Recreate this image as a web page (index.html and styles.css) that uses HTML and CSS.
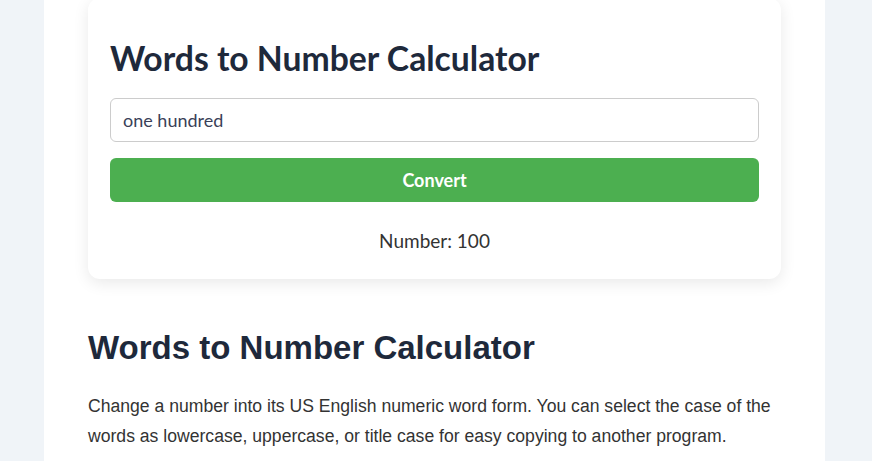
FILE: index.html
```html
<!DOCTYPE html>
<html lang="en">
<head>
<meta charset="utf-8">
<title>Words to Number Calculator</title>
<link rel="stylesheet" href="styles.css">
</head>
<body>
<div class="page">
  <main class="container">
    <section class="card">
      <h1 class="card-title">Words to Number Calculator</h1>
      <input class="words-input" type="text" value="one hundred">
      <button class="convert-btn" type="button">Convert</button>
      <p class="result">Number: 100</p>
    </section>
    <article class="content">
      <h2 class="content-title">Words to Number Calculator</h2>
      <p class="content-text">Change a number into its US English numeric word form. You can select the case of the words as lowercase, uppercase, or title case for easy copying to another program.</p>
    </article>
  </main>
</div>
</body>
</html>
```
FILE: styles.css
```css
html, body {
  margin: 0;
  padding: 0;
  background: #f0f4f8;
  overflow: hidden;
}
.page {
  height: 461px;
  padding-left: 44px;
}
.container {
  display: flow-root;
  width: 781px;
  height: 100%;
  background: #ffffff;
  padding: 0 44px;
  box-sizing: border-box;
}
.card {
  margin-top: -2px;
  background: #ffffff;
  border-radius: 12px;
  box-shadow: 0 4px 16px rgba(0, 0, 0, 0.09);
  padding: 40px 22px 26px;
  font-family: Lato, "Noto Sans", sans-serif;
}
.card-title {
  margin: 0 0 20px;
  font-size: 33.7px;
  line-height: 40px;
  font-weight: 700;
  color: #1e293b;
}
.words-input {
  display: block;
  width: 100%;
  box-sizing: border-box;
  height: 44px;
  padding: 0 12px;
  border: 1px solid #cccccc;
  border-radius: 6px;
  font-family: Lato, "Noto Sans", sans-serif;
  font-size: 18px;
  color: #3a3f58;
  outline: none;
}
.convert-btn {
  display: block;
  width: 100%;
  height: 44px;
  margin-top: 16px;
  border: none;
  border-radius: 6px;
  background: #4caf50;
  color: #ffffff;
  font-family: Lato, "Noto Sans", sans-serif;
  font-size: 18px;
  font-weight: 700;
}
.result {
  margin: 27px 0 0;
  text-align: center;
  font-size: 19px;
  line-height: 24px;
  color: #333333;
}
.content {
  padding-top: 49px;
  font-family: "Liberation Sans", Arial, sans-serif;
}
.content-title {
  margin: 0 0 23px;
  font-size: 33px;
  line-height: 40px;
  font-weight: 700;
  color: #1e293b;
}
.content-text {
  margin: 0;
  font-size: 17.6px;
  line-height: 30px;
  color: #333333;
}
```
